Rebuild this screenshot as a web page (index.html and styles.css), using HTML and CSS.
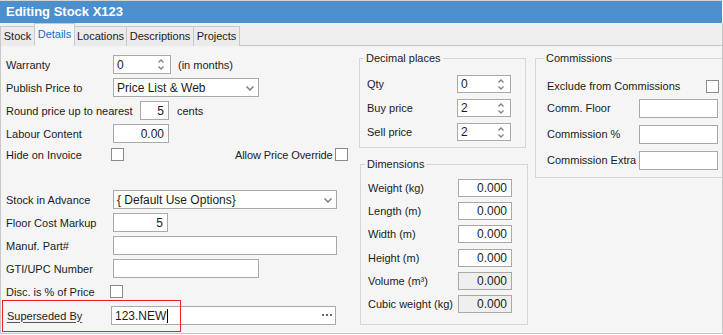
FILE: index.html
```html
<!DOCTYPE html>
<html>
<head>
<meta charset="utf-8">
<link rel="stylesheet" href="styles.css">
</head>
<body>
<div class="window">
  <div class="titlebar">Editing Stock X123</div>
  <div class="tabs">
    <div class="tab t-stock">Stock</div>
    <div class="tab t-details active">Details</div>
    <div class="tab t-loc">Locations</div>
    <div class="tab t-desc">Descriptions</div>
    <div class="tab t-proj">Projects</div>
  </div>
  <div class="content">
    <div class="col-left">
      <div class="row">
        <span class="lbl">Warranty</span>
        <div class="field spin w58"><span>0</span>
          <svg class="spinarrows" width="6" height="11" viewBox="0 0 6 11"><path d="M0.5 3.5 L3 1 L5.5 3.5 M0.5 7.5 L3 10 L5.5 7.5" fill="none" stroke="#808080" stroke-width="1.3"/></svg>
        </div>
        <span class="after">(in months)</span>
      </div>
      <div class="row">
        <span class="lbl">Publish Price to</span>
        <div class="field select w146"><span>Price List &amp; Web</span>
          <svg class="chev" width="8" height="5" viewBox="0 0 8 5"><path d="M0.5 0.5 L4 4 L7.5 0.5" fill="none" stroke="#808080" stroke-width="1.5"/></svg>
        </div>
      </div>
      <div class="row">
        <span class="lbl lbl-round">Round price up to nearest</span>
        <div class="field num w29"><span>5</span></div>
        <span class="after after-cents">cents</span>
      </div>
      <div class="row">
        <span class="lbl">Labour Content</span>
        <div class="field num w56"><span>0.00</span></div>
      </div>
      <div class="row row-chk">
        <span class="lbl lbl-chk">Hide on Invoice</span>
        <div class="chk"></div>
        <span class="override">Allow Price Override</span>
        <div class="chk"></div>
      </div>
      <div class="row row-gap">
        <span class="lbl">Stock in Advance</span>
        <div class="field select w224"><span>{ Default Use Options}</span>
          <svg class="chev" width="8" height="5" viewBox="0 0 8 5"><path d="M0.5 0.5 L4 4 L7.5 0.5" fill="none" stroke="#808080" stroke-width="1.5"/></svg>
        </div>
      </div>
      <div class="row">
        <span class="lbl">Floor Cost Markup</span>
        <div class="field num w55"><span>5</span></div>
      </div>
      <div class="row">
        <span class="lbl">Manuf. Part#</span>
        <div class="field w224"></div>
      </div>
      <div class="row">
        <span class="lbl">GTI/UPC Number</span>
        <div class="field w146"></div>
      </div>
      <div class="row">
        <span class="lbl lbl-disc">Disc. is % of Price</span>
        <div class="chk"></div>
      </div>
      <div class="row row-super">
        <span class="lbl lbl-super">Superseded By</span>
        <div class="field w225 super"><span>123.NEW</span><i class="caret"></i>
          <span class="dots"><b></b><b></b><b></b></span>
        </div>
        <div class="highlight"></div>
      </div>
    </div>

    <div class="col-mid">
      <fieldset class="group g-dec">
        <legend>Decimal places</legend>
        <div class="grow"><span class="glbl">Qty</span>
          <div class="field spin w54"><span>0</span>
            <svg class="spinarrows" width="6" height="11" viewBox="0 0 6 11"><path d="M0.5 3.5 L3 1 L5.5 3.5 M0.5 7.5 L3 10 L5.5 7.5" fill="none" stroke="#808080" stroke-width="1.3"/></svg>
          </div></div>
        <div class="grow"><span class="glbl">Buy price</span>
          <div class="field spin w54"><span>2</span>
            <svg class="spinarrows" width="6" height="11" viewBox="0 0 6 11"><path d="M0.5 3.5 L3 1 L5.5 3.5 M0.5 7.5 L3 10 L5.5 7.5" fill="none" stroke="#808080" stroke-width="1.3"/></svg>
          </div></div>
        <div class="grow"><span class="glbl">Sell price</span>
          <div class="field spin w54"><span>2</span>
            <svg class="spinarrows" width="6" height="11" viewBox="0 0 6 11"><path d="M0.5 3.5 L3 1 L5.5 3.5 M0.5 7.5 L3 10 L5.5 7.5" fill="none" stroke="#808080" stroke-width="1.3"/></svg>
          </div></div>
      </fieldset>
      <fieldset class="group g-dim">
        <legend>Dimensions</legend>
        <div class="drow"><span class="glbl">Weight (kg)</span><div class="field num w54"><span>0.000</span></div></div>
        <div class="drow"><span class="glbl">Length (m)</span><div class="field num w54"><span>0.000</span></div></div>
        <div class="drow"><span class="glbl">Width (m)</span><div class="field num w54"><span>0.000</span></div></div>
        <div class="drow"><span class="glbl">Height (m)</span><div class="field num w54"><span>0.000</span></div></div>
        <div class="drow"><span class="glbl">Volume (m³)</span><div class="field num w54 ro"><span>0.000</span></div></div>
        <div class="drow"><span class="glbl">Cubic weight (kg)</span><div class="field num w54 ro"><span>0.000</span></div></div>
      </fieldset>
    </div>

    <div class="col-right">
      <fieldset class="group g-comm">
        <legend>Commissions</legend>
        <div class="crow crow-first"><span class="clbl">Exclude from Commissions</span><div class="chk chk-excl"></div></div>
        <div class="crow"><span class="clbl">Comm. Floor</span><div class="field w79"></div></div>
        <div class="crow"><span class="clbl">Commission %</span><div class="field w79"></div></div>
        <div class="crow crow-last"><span class="clbl">Commission Extra</span><div class="field w79"></div></div>
      </fieldset>
    </div>
  </div>
</div>
</body>
</html>
```

FILE: styles.css
```css
* { box-sizing: border-box; }
html, body { margin: 0; padding: 0; background: #ffffff; }
body {
  font-family: "Liberation Sans", Arial, sans-serif;
  font-size: 11px;
  color: #1b1b1b;
}
.window {
  width: 723px;
  height: 335px;
  border-top: 1px solid #d4d4d4;
  overflow: hidden;
  background: #ffffff;
}
.titlebar {
  height: 22px;
  background: #4b8fcc;
  color: #ffffff;
  font-weight: bold;
  font-size: 13px;
  line-height: 22px;
  padding-left: 6px;
  margin-right: 1px;
}
.tabs {
  height: 23px;
  background: #efefef;
  border-bottom: 1px solid #c6c6c6;
  border-right: 1px solid #c6c6c6;
  display: flex;
  align-items: flex-end;
}
.tab {
  height: 20px;
  line-height: 19px;
  border: 1px solid #c8c8c8;
  border-bottom: none;
  background: #ebebeb;
  text-align: center;
  margin-bottom: -1px;
  color: #202020;
}
.tab + .tab { margin-left: -1px; }
.t-stock { width: 35px; }
.t-details { width: 41px; }
.t-loc { width: 53px; }
.t-desc { width: 68px; }
.t-proj { width: 47px; }
.tab.active {
  height: 23px;
  line-height: 21px;
  background: #f5f5f5;
  color: #1a6fc4;
  position: relative;
  z-index: 1;
  border-bottom: 1px solid #f5f5f5;
}
.content {
  height: 288px;
  background: #f5f5f5;
  border-left: 1px solid #c8c8c8;
  border-right: 1px solid #c6c6c6;
  border-bottom: 1px solid #c6c6c6;
  display: flex;
}
.col-left {
  width: 358px;
  padding-top: 9px;
  padding-left: 5px;
  display: flex;
  flex-direction: column;
  gap: 4px;
}
.row {
  height: 19px;
  display: flex;
  align-items: center;
  position: relative;
}
.row-chk { margin-top: -2px; }
.row-gap { margin-top: 22px; }
.row-super { margin-top: 1px; }
.lbl { width: 107px; flex: none; white-space: nowrap; }
.lbl-round { width: 134px; }
.lbl-chk { width: 105px; }
.lbl-disc { width: 104px; }
.lbl-super { width: 106px; padding-left: 1px; text-decoration: underline; text-decoration-color: #555; text-underline-offset: 2px; }
.after { margin-left: 7px; }
.after-cents { margin-left: 8px; }
.override { margin-left: 111px; margin-right: 2px; letter-spacing: -0.1px; }

.field {
  height: 19px;
  border: 1px solid #a9a9a9;
  background: #ffffff;
  display: flex;
  align-items: center;
  padding: 0 3px;
  position: relative;
  flex: none;
  font-size: 12px;
  color: #1b1b1b;
}
.field.num { justify-content: flex-end; padding-right: 4px; }
.field.ro { background: #efefef; }
.w29 { width: 29px; }
.w54 { width: 54px; }
.w55 { width: 55px; }
.w56 { width: 56px; }
.w58 { width: 58px; }
.w79 { width: 79px; }
.w146 { width: 146px; }
.w224 { width: 224px; }
.w225 { width: 225px; margin-left: -1px; }
.spinarrows { position: absolute; right: 6px; top: 3px; }
.chev { position: absolute; right: 4px; top: 7px; }
.caret { display: inline-block; width: 1px; height: 14px; background: #000; margin-left: 1px; }
.dots { position: absolute; right: 3px; top: 7px; display: flex; gap: 2px; }
.dots b { width: 2px; height: 2px; background: #666; display: block; }
.chk {
  width: 13px;
  height: 13px;
  border: 1px solid #8a8a8a;
  background: #ffffff;
  flex: none;
}
.highlight {
  position: absolute;
  left: -4px;
  top: -6px;
  width: 179px;
  height: 32px;
  border: 1px solid #e8202a;
  pointer-events: none;
}

.col-mid {
  width: 176px;
  padding-top: 6px;
}
.group {
  margin: 0;
  border: 1px solid #d6d6d6;
  padding: 0 0 0 7px;
}
.group legend {
  padding: 0 2px;
  margin-left: -3px;
  line-height: 13px;
  font-size: 11px;
}
.g-dec { width: 167px; height: 96px; padding-top: 10px; }
.grow {
  height: 18px;
  display: flex;
  align-items: center;
  margin-bottom: 6px;
}
.grow .field, .drow .field { height: 18px; }
.glbl { width: 90px; flex: none; }
.g-dim { width: 168px; height: 167px; margin-top: 10px; margin-left: 1px; padding-top: 8px; }
.drow {
  height: 18px;
  display: flex;
  align-items: center;
  margin-bottom: 5.2px;
}

.col-right {
  flex: 1;
  padding-top: 6px;
  min-width: 0;
}
.g-comm { width: 200px; height: 126px; padding-left: 11px; padding-top: 14px; }
.crow {
  height: 20px;
  display: flex;
  align-items: center;
  margin-bottom: 6px;
}
.crow-first { height: 14px; margin-bottom: 5px; }
.crow-last { margin-top: 3px; }
.clbl { width: 92px; flex: none; white-space: nowrap; }
.chk-excl { margin-left: 67px; }
```
